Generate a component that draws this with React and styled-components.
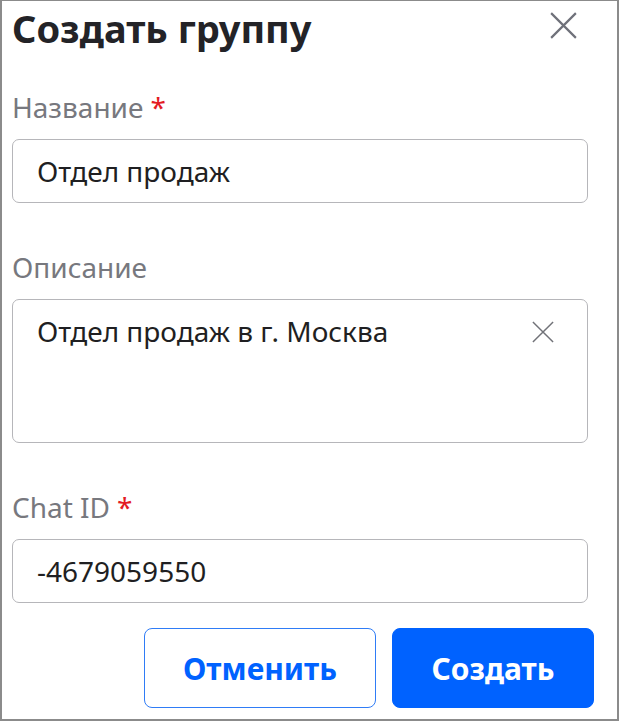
import styled, { createGlobalStyle } from 'styled-components'

const GlobalStyle = createGlobalStyle`
  html, body {
    margin: 0;
    padding: 0;
    background: #ffffff;
  }
  body {
    font-family: "Noto Sans", "Open Sans", sans-serif;
  }
  * {
    box-sizing: border-box;
  }
`

const Frame = styled.div`
  width: 619px;
  height: 721px;
  border: 2px solid #8b8b8b;
  border-top-width: 1px;
  background: #ffffff;
  padding: 4px 0 0 10px;
  display: flex;
  flex-direction: column;
`

const Header = styled.div`
  display: flex;
  justify-content: space-between;
  align-items: flex-start;
  width: 576px;
`

const Title = styled.h2`
  margin: 0;
  font-size: 38px;
  line-height: 46px;
  font-weight: 700;
  color: #232327;
`

const IconButton = styled.button`
  border: none;
  background: none;
  padding: 0;
  margin: ${p => p.$margin || '0'};
  width: ${p => p.$size}px;
  height: ${p => p.$size}px;
  display: flex;
  flex-shrink: 0;
  cursor: pointer;
  color: ${p => p.$color};
`

const Field = styled.div`
  display: flex;
  flex-direction: column;
  margin-top: ${p => p.$top}px;
`

const Label = styled.label`
  font-size: 28px;
  line-height: 36px;
  color: #77787e;
`

const Required = styled.span`
  color: #e31b23;
  margin-left: 7px;
`

const InputBox = styled.div`
  margin-top: 14px;
  width: 576px;
  height: ${p => p.$height}px;
  border: 1px solid #b6b6ba;
  border-radius: 7px;
  display: flex;
  align-items: ${p => (p.$multiline ? 'flex-start' : 'center')};
  justify-content: space-between;
  padding: ${p => (p.$multiline ? '13px 33px 0 24px' : '0 24px')};
`

const Value = styled.span`
  font-size: 28px;
  line-height: 36px;
  color: #1f1f22;
`

const Footer = styled.div`
  display: flex;
  justify-content: flex-end;
  gap: 16px;
  margin-top: 25px;
  padding-right: 23px;
`

const Button = styled.button`
  height: 80px;
  width: ${p => p.$width}px;
  border-radius: 8px;
  font-family: "Noto Sans", "Open Sans", sans-serif;
  font-size: 30px;
  font-weight: 700;
  cursor: pointer;
  border: 1.5px solid ${p => (p.$primary ? '#0062ff' : '#2f7cf6')};
  background: ${p => (p.$primary ? '#0062ff' : '#ffffff')};
  color: ${p => (p.$primary ? '#ffffff' : '#0062ff')};
`

function Cross({ size, stroke }) {
  return (
    <svg width={size} height={size} viewBox="0 0 24 24" fill="none">
      <path d="M1 1L23 23M23 1L1 23" stroke="currentColor" strokeWidth={stroke} />
    </svg>
  )
}

export default function App() {
  return (
    <>
      <GlobalStyle />
      <Frame>
        <Header>
          <Title>Создать группу</Title>
          <IconButton $size={27} $color="#6f717a" $margin="7px 11px 0 0">
            <Cross size={27} stroke={1.9} />
          </IconButton>
        </Header>

        <Field $top={38}>
          <Label>
            Название<Required>*</Required>
          </Label>
          <InputBox $height={64}>
            <Value>Отдел продаж</Value>
          </InputBox>
        </Field>

        <Field $top={46}>
          <Label>Описание</Label>
          <InputBox $height={144} $multiline>
            <Value>Отдел продаж в г. Москва</Value>
            <IconButton $size={22} $color="#717278" $margin="8px 0 0 0">
              <Cross size={22} stroke={1.6} />
            </IconButton>
          </InputBox>
        </Field>

        <Field $top={46}>
          <Label>
            Chat ID<Required>*</Required>
          </Label>
          <InputBox $height={64}>
            <Value>-4679059550</Value>
          </InputBox>
        </Field>

        <Footer>
          <Button $width={232}>Отменить</Button>
          <Button $width={202} $primary>Создать</Button>
        </Footer>
      </Frame>
    </>
  )
}
